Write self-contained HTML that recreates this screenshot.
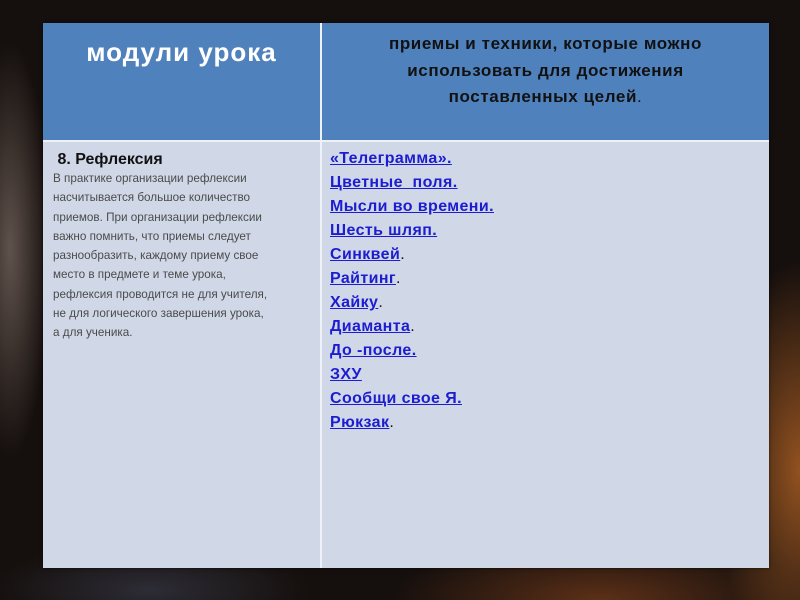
<!DOCTYPE html>
<html><head><meta charset="utf-8"><style>
html,body{margin:0;padding:0}
body{width:800px;height:600px;overflow:hidden;position:relative;font-family:"Liberation Sans",sans-serif;
background:
radial-gradient(ellipse 120px 300px at 800px 470px,rgba(200,110,40,.7),rgba(0,0,0,0) 70%),
radial-gradient(ellipse 300px 90px at 600px 600px,rgba(140,70,30,.6),rgba(0,0,0,0) 70%),
radial-gradient(ellipse 50px 260px at 10px 250px,rgba(170,150,140,.5),rgba(0,0,0,0) 80%),
radial-gradient(ellipse 200px 60px at 150px 590px,rgba(90,100,130,.35),rgba(0,0,0,0) 80%),
#150f0d;}
.t{position:absolute;left:43px;top:23px;width:726px;height:545px;background:#d0d8e8;box-shadow:0 0 3px rgba(0,0,0,.6)}
.h{position:absolute;left:0;top:0;width:726px;height:117px;background:#4f81bd;border-bottom:2px solid #eef2f8}
.v{position:absolute;left:277px;top:0;width:2px;height:545px;background:#eef2f8}
.h1{position:absolute;left:0;width:277px;top:14px;text-align:center;color:#fff;font-weight:bold;font-size:26px;letter-spacing:1px}
.h2{position:absolute;left:279px;width:447px;top:8px;text-align:center;color:#111;font-weight:bold;font-size:17px;line-height:26.5px;letter-spacing:.6px}
.l{position:absolute;left:10px;top:127px;color:#4a4a4a;font-size:11.7px;line-height:19.3px;white-space:nowrap}
.l b{color:#111;font-size:16px;display:block;line-height:20px;margin-bottom:-1px}
.r{position:absolute;left:287px;top:124px;font-size:16px;line-height:24px;color:#111}
.r a{color:#1c1cd0;text-decoration:underline;font-weight:bold;letter-spacing:.4px}
</style></head><body>
<div class="t">
<div class="h"></div>
<div class="v"></div>
<div class="h1">модули урока</div>
<div class="h2">приемы и техники, которые можно<br>использовать для достижения<br>поставленных целей<span style="font-weight:normal">.</span></div>
<div class="l"><b>&nbsp;8. Рефлексия</b>В практике организации рефлексии<br>насчитывается большое количество<br>приемов. При организации рефлексии<br>важно помнить, что приемы следует<br>разнообразить, каждому приему свое<br>место в предмете и теме урока,<br>рефлексия проводится не для учителя,<br>не для логического завершения урока,<br>а для ученика.</div>
<div class="r"><a>«Телеграмма».</a><br><a>Цветные&nbsp; поля.</a><br><a>Мысли во времени.</a><br><a>Шесть шляп.</a><br><a>Синквей</a>.<br><a>Райтинг</a>.<br><a>Хайку</a>.<br><a>Диаманта</a>.<br><a>До -после.</a><br><a>ЗХУ</a><br><a>Сообщи свое Я.</a><br><a>Рюкзак</a>.</div>
</div>
</body></html>
